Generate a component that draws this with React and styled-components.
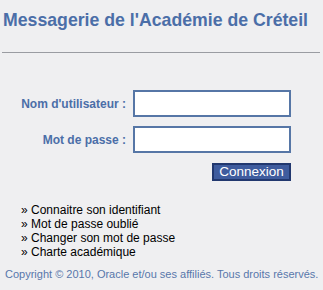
import React from "react";
import styled, { createGlobalStyle } from "styled-components";

const GlobalStyle = createGlobalStyle`
  html, body {
    margin: 0;
    padding: 0;
    background: #efeff1;
  }
  body {
    font-family: "Liberation Sans", Arial, sans-serif;
  }
`;

const Page = styled.div`
  width: 323px;
  height: 290px;
  overflow: hidden;
  padding-top: 10px;
  box-sizing: border-box;
`;

const Title = styled.h1`
  margin: 0 0 0 3px;
  font-size: 17.7px;
  font-weight: bold;
  color: #4b6ea8;
  line-height: 20px;
  white-space: nowrap;
`;

const Rule = styled.hr`
  margin: 22px 3px 0 2px;
  border: 0;
  height: 1px;
  background: #9a9ca2;
`;

const LoginForm = styled.form`
  display: grid;
  grid-template-columns: 126px 158px;
  column-gap: 7px;
  row-gap: 9px;
  align-items: center;
  margin-top: 37px;
`;

const Label = styled.label`
  text-align: right;
  font-size: 12px;
  font-weight: bold;
  color: #4b6ea8;
  white-space: nowrap;
`;

const Field = styled.input`
  box-sizing: border-box;
  width: 158px;
  height: 27px;
  border: 2px solid #5676a6;
  background: #fff;
  margin: 0;
  padding: 2px 4px;
  font: 12px "Liberation Sans", Arial, sans-serif;
  outline: none;
`;

const Submit = styled.button`
  grid-column: 2;
  justify-self: end;
  margin-top: 1px;
  width: 79px;
  height: 18px;
  padding: 0;
  box-sizing: border-box;
  background: #3f5c9e;
  border: 2px solid #22386f;
  color: #fff;
  font: 13.5px/14px "Liberation Sans", Arial, sans-serif;
  cursor: pointer;
`;

const Links = styled.ul`
  list-style: none;
  margin: 22px 0 0 21px;
  padding: 0;
`;

const LinkItem = styled.li`
  font-size: 12px;
  line-height: 14px;
  color: #000;
  white-space: nowrap;

  &::before {
    content: "» ";
  }
`;

const Copyright = styled.p`
  margin: 9px 0 0 5px;
  font-size: 11px;
  line-height: 13px;
  color: #5877ab;
  white-space: nowrap;
`;

const links = [
  "Connaitre son identifiant",
  "Mot de passe oublié",
  "Changer son mot de passe",
  "Charte académique",
];

export default function App() {
  return (
    <Page>
      <GlobalStyle />
      <Title>Messagerie de l'Académie de Créteil</Title>
      <Rule />
      <LoginForm onSubmit={(e) => e.preventDefault()}>
        <Label htmlFor="user">Nom d'utilisateur :</Label>
        <Field id="user" type="text" />
        <Label htmlFor="pass">Mot de passe :</Label>
        <Field id="pass" type="password" />
        <Submit type="submit">Connexion</Submit>
      </LoginForm>
      <Links>
        {links.map((text) => (
          <LinkItem key={text}>{text}</LinkItem>
        ))}
      </Links>
      <Copyright>Copyright © 2010, Oracle et/ou ses affiliés. Tous droits réservés.</Copyright>
    </Page>
  );
}
